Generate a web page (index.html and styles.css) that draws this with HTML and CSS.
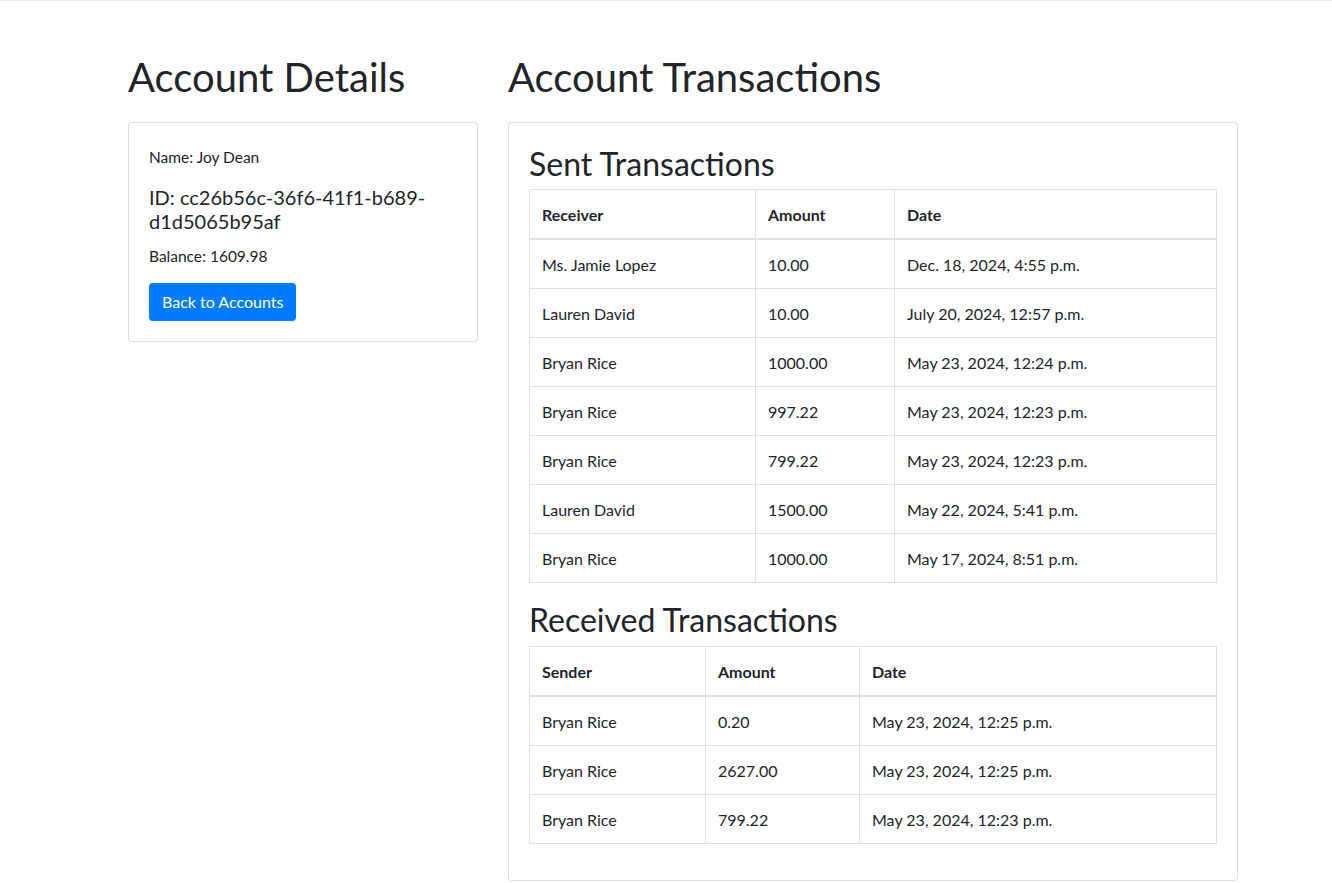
FILE: index.html
```html
<!DOCTYPE html>
<html lang="en">
<head>
<meta charset="utf-8">
<title>Account Details</title>
<link rel="stylesheet" href="styles.css">
</head>
<body>
<div class="topline"></div>
<div class="container">
  <div class="row">
    <div class="col-left">
      <h1 class="page-title">Account Details</h1>
      <div class="card">
        <div class="card-body">
          <p class="info name">Name: Joy Dean</p>
          <h5 class="acc-id">ID: cc26b56c-36f6-41f1-b689-d1d5065b95af</h5>
          <p class="info balance">Balance: 1609.98</p>
          <a class="btn" href="#">Back to Accounts</a>
        </div>
      </div>
    </div>
    <div class="col-right">
      <h1 class="page-title">Account Transactions</h1>
      <div class="card">
        <div class="card-body">
          <h2 class="section-title">Sent Transactions</h2>
          <table class="table">
            <thead>
              <tr><th class="s1">Receiver</th><th class="s2">Amount</th><th class="s3">Date</th></tr>
            </thead>
            <tbody>
              <tr><td>Ms. Jamie Lopez</td><td>10.00</td><td>Dec. 18, 2024, 4:55 p.m.</td></tr>
              <tr><td>Lauren David</td><td>10.00</td><td>July 20, 2024, 12:57 p.m.</td></tr>
              <tr><td>Bryan Rice</td><td>1000.00</td><td>May 23, 2024, 12:24 p.m.</td></tr>
              <tr><td>Bryan Rice</td><td>997.22</td><td>May 23, 2024, 12:23 p.m.</td></tr>
              <tr><td>Bryan Rice</td><td>799.22</td><td>May 23, 2024, 12:23 p.m.</td></tr>
              <tr><td>Lauren David</td><td>1500.00</td><td>May 22, 2024, 5:41 p.m.</td></tr>
              <tr><td>Bryan Rice</td><td>1000.00</td><td>May 17, 2024, 8:51 p.m.</td></tr>
            </tbody>
          </table>
          <h2 class="section-title">Received Transactions</h2>
          <table class="table last">
            <thead>
              <tr><th class="r1">Sender</th><th class="r2">Amount</th><th class="r3">Date</th></tr>
            </thead>
            <tbody>
              <tr><td>Bryan Rice</td><td>0.20</td><td>May 23, 2024, 12:25 p.m.</td></tr>
              <tr><td>Bryan Rice</td><td>2627.00</td><td>May 23, 2024, 12:25 p.m.</td></tr>
              <tr><td>Bryan Rice</td><td>799.22</td><td>May 23, 2024, 12:23 p.m.</td></tr>
            </tbody>
          </table>
        </div>
      </div>
    </div>
  </div>
</div>
</body>
</html>
```
FILE: styles.css
```css
* { box-sizing: border-box; }
html, body { margin: 0; padding: 0; }
body {
  font-family: "Lato", "Liberation Sans", sans-serif;
  font-size: 16px;
  line-height: 1.5;
  color: #212529;
  background: #fff;
}
.topline {
  height: 2px;
  border-top: 1px solid #ececec;
}
.container {
  width: 1110px;
  margin-left: 128px;
  padding-top: 50px;
}
.row {
  display: flex;
  gap: 30px;
  align-items: flex-start;
}
.col-left { width: 350px; flex: none; }
.col-right { width: 730px; flex: none; }
.page-title {
  font-size: 40px;
  font-weight: 400;
  line-height: 1.2;
  padding-top: 1px;
  margin: 0 0 21px 0;
}
.card {
  border: 1px solid rgba(0,0,0,.125);
  border-radius: 4px;
  background: #fff;
}
.card-body { padding: 20px; }
.info {
  font-size: 15.5px;
  line-height: 24px;
  margin: 0;
}
.name {
  line-height: 28px;
  margin-bottom: 14px;
}
.balance {
  margin-bottom: 15px;
}
.acc-id {
  font-size: 20px;
  font-weight: 400;
  line-height: 24px;
  margin: 0 0 11px 0;
  word-break: break-word;
}
.btn {
  display: inline-block;
  background: #007bff;
  color: #fff;
  text-decoration: none;
  font-size: 16px;
  line-height: 24px;
  padding: 7px 13px;
  border-radius: 4px;
}
.section-title {
  font-size: 32px;
  font-weight: 400;
  line-height: 1.2;
  padding-top: 2px;
  margin: 0 0 6px 0;
}
.table {
  width: 100%;
  border-collapse: collapse;
  border: 1px solid #dee2e6;
  margin-bottom: 16px;
  table-layout: fixed;
}
.table th, .table td {
  border: 1px solid #dee2e6;
  padding: 13px 12px 11px;
  text-align: left;
  vertical-align: top;
  line-height: 24px;
}
.table th { font-weight: 700; }
.table thead th { border-bottom-width: 2px; }
.s1 { width: 226px; }
.s2 { width: 139px; }
.r1 { width: 176px; }
.r2 { width: 154px; }
```
